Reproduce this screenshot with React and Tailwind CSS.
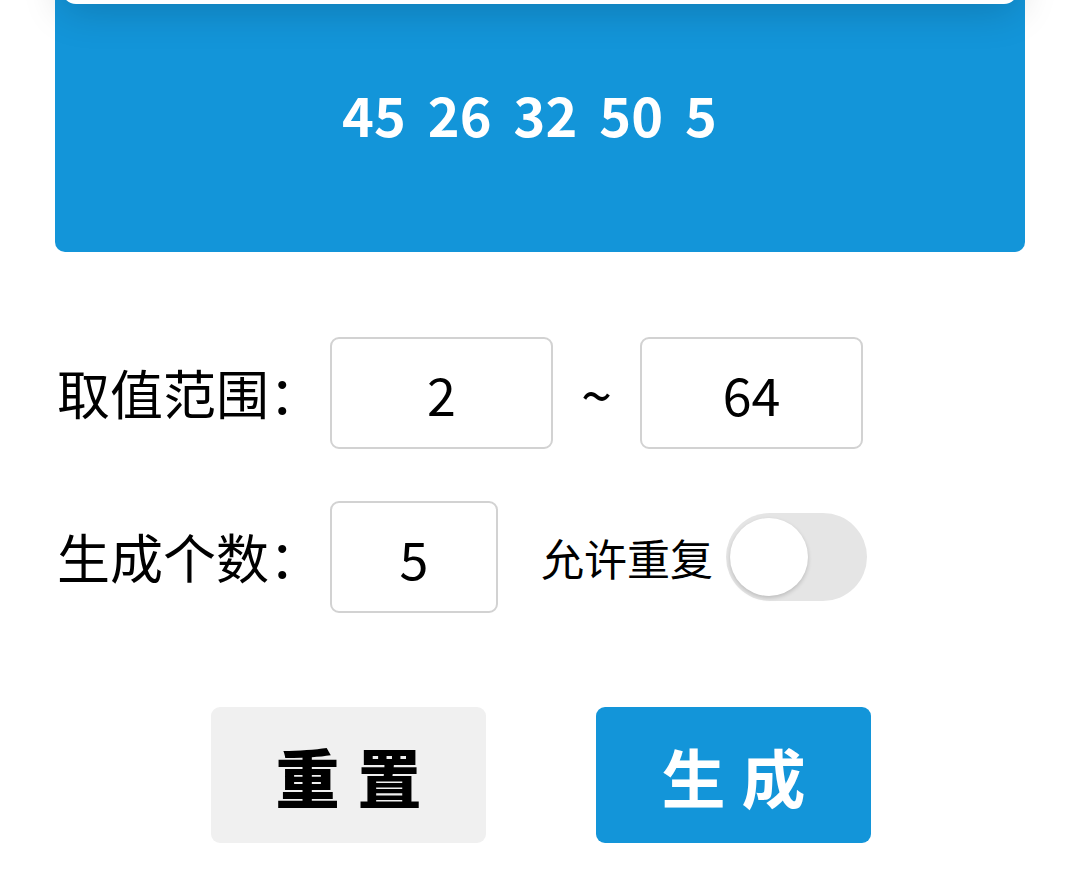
import React, { useState } from "react";

const FONT = "font-['Noto_Sans_CJK_SC','Noto_Sans',sans-serif]";

const NumberBox = ({ value, width }) => (
  <input
    type="text"
    defaultValue={value}
    className={`${width} h-[112px] rounded-[9px] border-2 border-[#d2d2d2] bg-white text-center text-[52px] text-black outline-none`}
  />
);

const Toggle = ({ on, onChange }) => (
  <button
    type="button"
    onClick={() => onChange(!on)}
    className={`relative h-[88px] w-[141px] rounded-full p-[4px] ${on ? "bg-[#1296db]" : "bg-[#e5e5e5]"}`}
  >
    <span
      className={`block h-[78px] w-[78px] rounded-full bg-white shadow-[0_2px_4px_rgba(0,0,0,0.18)] ${on ? "ml-[55px]" : "ml-0"}`}
    />
  </button>
);

export default function App() {
  const [allowRepeat, setAllowRepeat] = useState(false);
  const numbers = [45, 26, 32, 50, 5];

  return (
    <div className={`${FONT} h-[884px] w-[1080px] overflow-hidden bg-white`}>
      <div className="px-[55px]">
        {/* card above, only its bottom edge shows */}
        <div className="relative z-10 mx-[7px] -mt-[40px] h-[44px] rounded-b-[14px] bg-white shadow-[0_6px_40px_rgba(0,0,0,0.18)]" />

        {/* result */}
        <div className="-mt-[4px] flex h-[252px] items-center justify-center gap-[22px] rounded-b-[10px] bg-[#1395d9] pb-[26px] pr-[21px] text-[54px] font-semibold text-white">
          {numbers.map((n, i) => (
            <span key={i}>{n}</span>
          ))}
        </div>

        {/* range */}
        <div className="mt-[85px] flex items-center">
          <span className="w-[275px] pl-[2px] text-[53px] text-black">取值范围：</span>
          <NumberBox value="2" width="w-[223px]" />
          <span className="w-[87px] text-center text-[56px] leading-none text-black">~</span>
          <NumberBox value="64" width="w-[223px]" />
        </div>

        {/* count */}
        <div className="mt-[52px] flex items-center">
          <span className="w-[275px] pl-[2px] text-[53px] text-black">生成个数：</span>
          <NumberBox value="5" width="w-[168px]" />
          <span className="ml-[43px] mr-[13px] text-[43px] text-black">允许重复</span>
          <Toggle on={allowRepeat} onChange={setAllowRepeat} />
        </div>
      </div>

      {/* actions */}
      <div className="mt-[94px] flex justify-center gap-[110px] pl-[2px]">
        <button
          type="button"
          className="flex h-[136px] w-[275px] items-center justify-center gap-[18px] rounded-[9px] bg-[#f0f0f0] text-[64px] font-black text-black"
        >
          <span>重</span>
          <span>置</span>
        </button>
        <button
          type="button"
          className="flex h-[136px] w-[275px] items-center justify-center gap-[16px] rounded-[9px] bg-[#1395d9] text-[64px] font-bold text-white"
        >
          <span>生</span>
          <span>成</span>
        </button>
      </div>
    </div>
  );
}
